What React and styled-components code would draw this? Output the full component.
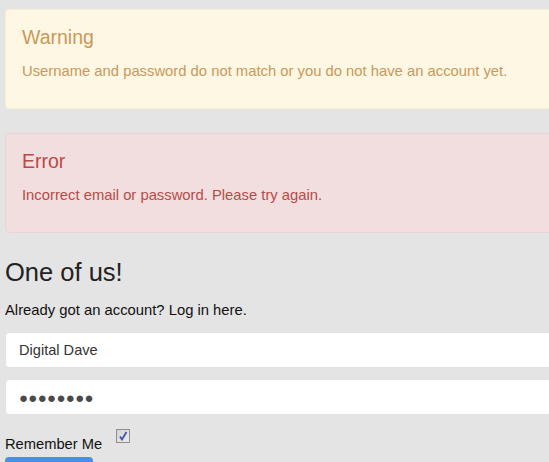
import React from "react";
import styled, { createGlobalStyle } from "styled-components";

const GlobalStyle = createGlobalStyle`
  html, body {
    margin: 0;
    padding: 0;
    background: #e4e4e4;
    overflow: hidden;
  }
  body {
    font-family: "Liberation Sans", Arial, sans-serif;
    color: #222;
  }
`;

const Page = styled.div`
  width: 620px;
  padding: 9px 5px 0;
`;

const Alert = styled.div`
  box-sizing: border-box;
  height: 100px;
  padding: 15px 16px 0;
  margin-bottom: 24px;
  border-radius: 4px;
  border: 1px solid ${(p) => (p.$kind === "error" ? "#edd3d6" : "#f8eed3")};
  background: ${(p) => (p.$kind === "error" ? "#f2dede" : "#fdf7e3")};
  color: ${(p) => (p.$kind === "error" ? "#b94a48" : "#c9995a")};
`;

const AlertTitle = styled.h4`
  margin: 0 0 12px;
  font-size: 19.5px;
  line-height: 24px;
  font-weight: normal;
`;

const AlertText = styled.p`
  margin: 0;
  font-size: 14.8px;
  line-height: 20px;
`;

const Heading = styled.h2`
  margin: 0 0 14px;
  font-size: 25.5px;
  line-height: 30px;
  font-weight: normal;
  color: #222;
`;

const Lead = styled.p`
  margin: 0 0 13px;
  font-size: 14.8px;
  line-height: 18px;
  color: #111;
`;

const Form = styled.form`
  display: flex;
  flex-direction: column;
`;

const Input = styled.input`
  box-sizing: border-box;
  width: 100%;
  height: 36px;
  padding: 0 13px;
  border: 1px solid #e2e2e2;
  border-radius: 4px;
  background: #fff;
  font-family: "Liberation Sans", Arial, sans-serif;
  font-size: ${(p) => (p.$dots ? "15px" : "14.6px")};
  letter-spacing: ${(p) => (p.$dots ? "0.3px" : "0")};
  color: ${(p) => (p.$dots ? "#4a4a4a" : "#333")};
  outline: none;

  & + & {
    margin-top: 11px;
  }
`;

const RememberRow = styled.label`
  display: flex;
  align-items: flex-start;
  gap: 14px;
  margin-top: 14px;
  font-size: 14.7px;
  line-height: 20px;
  color: #111;
`;

const RememberText = styled.span`
  padding-top: 5px;
`;

const CheckBox = styled.span`
  box-sizing: border-box;
  width: 14px;
  height: 14px;
  border: 1px solid #8e8e8e;
  background: linear-gradient(135deg, #d4d4d4, #ededed);
  display: flex;
  align-items: center;
  justify-content: center;
`;

const SubmitButton = styled.button`
  align-self: flex-start;
  width: 88px;
  height: 34px;
  margin-top: 3px;
  border: none;
  border-radius: 4px;
  background: #4a8fe3;
  color: #fff;
  font-family: "Liberation Sans", Arial, sans-serif;
  font-size: 15px;
`;

export default function App() {
  return (
    <>
      <GlobalStyle />
      <Page>
        <Alert $kind="warning">
          <AlertTitle>Warning</AlertTitle>
          <AlertText>
            Username and password do not match or you do not have an account yet.
          </AlertText>
        </Alert>
        <Alert $kind="error">
          <AlertTitle>Error</AlertTitle>
          <AlertText>Incorrect email or password. Please try again.</AlertText>
        </Alert>

        <Heading>One of us!</Heading>
        <Lead>Already got an account? Log in here.</Lead>

        <Form onSubmit={(e) => e.preventDefault()}>
          <Input type="text" defaultValue="Digital Dave" />
          <Input $dots type="text" defaultValue="●●●●●●●●" readOnly />
          <RememberRow>
            <RememberText>Remember Me</RememberText>
            <CheckBox>
              <svg width="10" height="10" viewBox="0 0 10 10">
                <path
                  d="M2 5.5 L4 8.5 L8.5 1"
                  fill="none"
                  stroke="#3d56b3"
                  strokeWidth="1.8"
                />
              </svg>
            </CheckBox>
          </RememberRow>
          <SubmitButton type="submit">Sign Up</SubmitButton>
        </Form>
      </Page>
    </>
  );
}
